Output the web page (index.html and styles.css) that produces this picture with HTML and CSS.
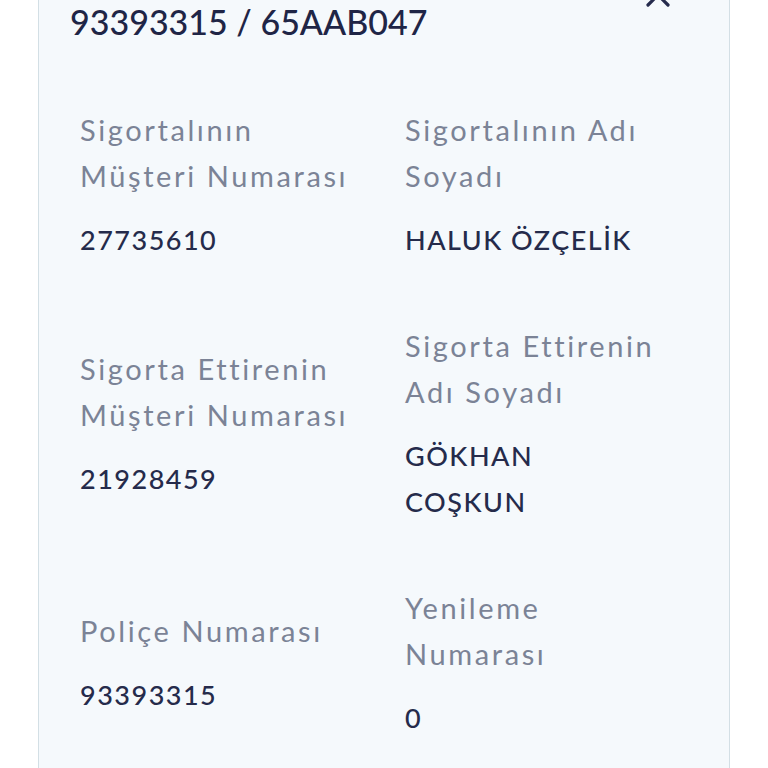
FILE: index.html
```html
<!DOCTYPE html>
<html lang="tr">
<head>
<meta charset="utf-8">
<title>Poliçe Detayı</title>
<link rel="stylesheet" href="styles.css">
</head>
<body>
<div class="card">
  <div class="header">
    <div class="title">93393315 / 65AAB047</div>
    <svg class="close" width="28" height="28" viewBox="0 0 28 28" aria-hidden="true">
      <path d="M4 4 L24 24 M24 4 L4 24" stroke="#252b4d" stroke-width="3.2" stroke-linecap="round" fill="none"/>
    </svg>
  </div>
  <div class="grid">
    <div class="field">
      <div class="label">Sigortalının Müşteri Numarası</div>
      <div class="value">27735610</div>
    </div>
    <div class="field">
      <div class="label">Sigortalının Adı Soyadı</div>
      <div class="value">HALUK ÖZÇELİK</div>
    </div>
    <div class="field">
      <div class="label">Sigorta Ettirenin Müşteri Numarası</div>
      <div class="value">21928459</div>
    </div>
    <div class="field">
      <div class="label">Sigorta Ettirenin Adı Soyadı</div>
      <div class="value">GÖKHAN COŞKUN</div>
    </div>
    <div class="field">
      <div class="label">Poliçe Numarası</div>
      <div class="value">93393315</div>
    </div>
    <div class="field">
      <div class="label">Yenileme Numarası</div>
      <div class="value">0</div>
    </div>
  </div>
</div>
</body>
</html>
```

FILE: styles.css
```css
html, body {
  margin: 0;
  padding: 0;
  background: #ffffff;
  height: 768px;
  overflow: hidden;
  font-family: "Lato", "Noto Sans", sans-serif;
}

.card {
  margin-left: 38px;
  width: 690px;
  min-height: 800px;
  background: #f5f9fc;
  border-left: 1px solid #d3dfe5;
  border-right: 1px solid #d3dfe5;
  box-sizing: content-box;
}

.header {
  display: flex;
  justify-content: space-between;
  align-items: flex-start;
  padding-left: 31px;
  padding-right: 57px;
}

.title {
  font-size: 34px;
  line-height: 44px;
  color: #1f2546;
  font-weight: 500;
}

.close {
  margin-top: -19px;
}

.grid {
  display: grid;
  grid-template-columns: 285px 255px;
  column-gap: 40px;
  row-gap: 60px;
  align-items: center;
  padding-left: 41px;
  padding-top: 63px;
}

.label {
  font-size: 29px;
  line-height: 46px;
  color: #7b8396;
  letter-spacing: 2.6px;
}

.value {
  margin-top: 18px;
  font-size: 27px;
  line-height: 46px;
  color: #252b4b;
  font-weight: 500;
  letter-spacing: 1.5px;
}
```
